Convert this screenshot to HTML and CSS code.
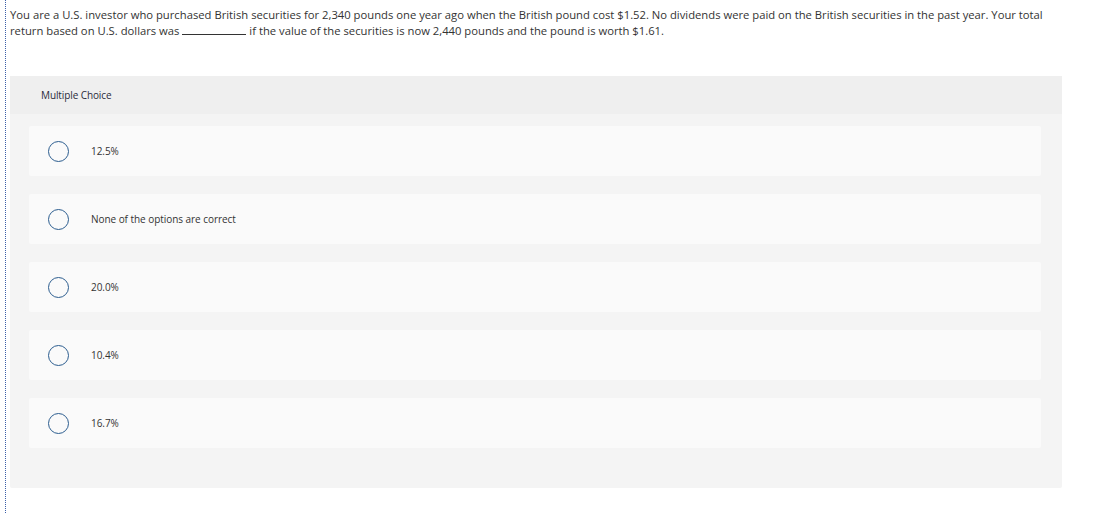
FILE: index.html
```html
<!DOCTYPE html>
<html>
<head>
<meta charset="utf-8">
<link rel="stylesheet" href="styles.css">
</head>
<body>
<div class="page">
  <p class="question"><span>You are a U.S. investor who purchased British securities for 2,340 pounds one year ago when the British pound cost $1.52. No dividends were paid on the British securities in the past year. Your total</span> <span>return based on U.S. dollars was</span> <span class="blank"></span> <span>if the value of the securities is now 2,440 pounds and the pound is worth $1.61.</span></p>
  <div class="panel">
    <div class="panel-head">Multiple Choice</div>
    <div class="panel-body">
      <div class="option"><span class="radio"></span><span class="label">12.5%</span></div>
      <div class="option"><span class="radio"></span><span class="label">None of the options are correct</span></div>
      <div class="option"><span class="radio"></span><span class="label">20.0%</span></div>
      <div class="option"><span class="radio"></span><span class="label">10.4%</span></div>
      <div class="option"><span class="radio"></span><span class="label">16.7%</span></div>
    </div>
  </div>
</div>
</body>
</html>
```
FILE: styles.css
```css
html, body {
  margin: 0;
  padding: 0;
  background: #fff;
}
body {
  font-family: "Open Sans", "Lato", sans-serif;
  color: #333;
}
.page {
  margin-left: 5px;
  border-left: 1px dotted #3b5fa8;
  min-height: 513px;
  padding: 7px 38px 0 4px;
  box-sizing: border-box;
}
.question {
  margin: 0;
  max-width: 1045px;
  font-size: 11.25px;
  line-height: 16px;
  color: #333;
}
.blank {
  display: inline-block;
  width: 64px;
  height: 9px;
  border-bottom: 1px solid #333;
  vertical-align: baseline;
}
.panel {
  margin-top: 37px;
  background: #f4f4f4;
  border-radius: 2px;
}
.panel-head {
  background: #efefef;
  height: 38px;
  display: flex;
  align-items: center;
  padding-left: 31px;
  font-size: 10px;
  letter-spacing: -0.1px;
  color: #2b2b3a;
}
.panel-body {
  display: flex;
  flex-direction: column;
  gap: 18px;
  padding: 12px 21px 40px 19px;
}
.option {
  height: 50px;
  background: #fafafa;
  border-radius: 2px;
  display: flex;
  align-items: center;
  padding-left: 19px;
}
.radio {
  width: 19px;
  height: 19px;
  border: 1.5px solid #2c5d8f;
  border-radius: 50%;
  flex: none;
}
.label {
  margin-left: 22px;
  font-size: 10px;
  letter-spacing: -0.05px;
  color: #333;
}
```
